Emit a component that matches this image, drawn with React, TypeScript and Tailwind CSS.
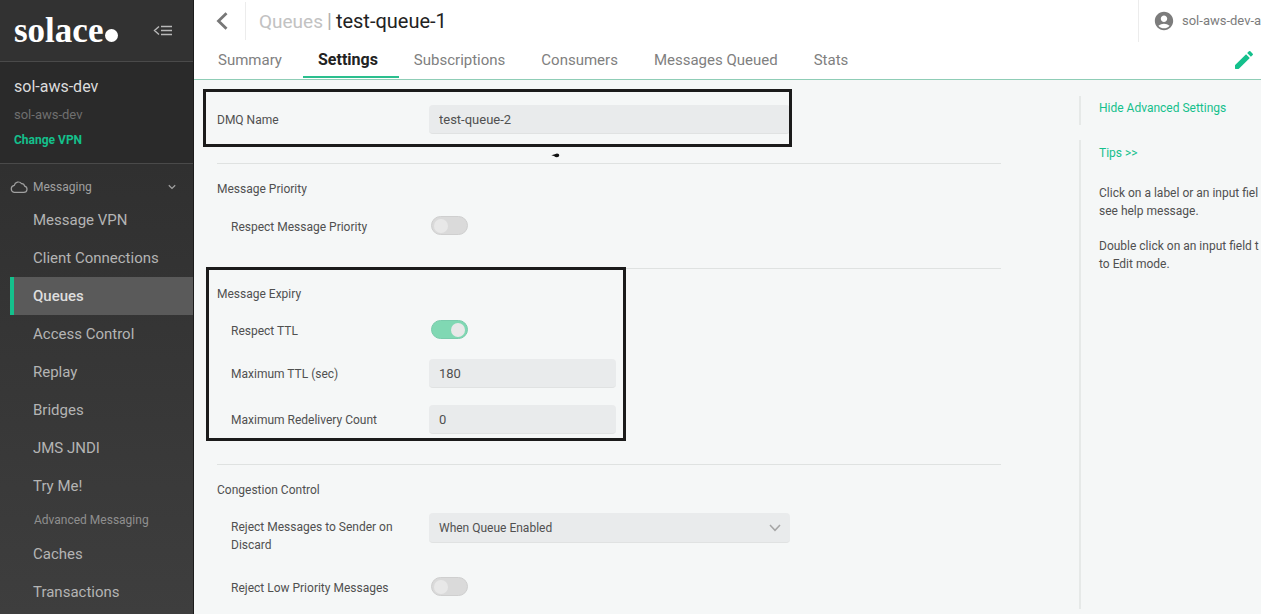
import { useId, useState } from "react";
import type { ReactNode } from "react";
import { MdAccountCircle } from "react-icons/md";

const primaryLinks = [
  "Message VPN",
  "Client Connections",
  "Queues",
  "Access Control",
  "Replay",
  "Bridges",
  "JMS JNDI",
  "Try Me!",
];
const advancedLinks = ["Caches", "Transactions"];
const tabs = ["Summary", "Settings", "Subscriptions", "Consumers", "Messages Queued", "Stats"];

function NavLink({ label }: { label: string }) {
  const active = label === "Queues";
  return (
    <li className="pl-[10px]">
      <a
        href="#"
        aria-current={active ? "page" : undefined}
        className={
          active
            ? "flex h-[38px] items-center border-l-4 border-[#14c08c] bg-[#5a5a5a] pl-[19px] font-medium text-[#dedede]"
            : "flex h-[38px] items-center pl-[23px] text-[#b4b4b4]"
        }
      >
        {label}
      </a>
    </li>
  );
}

function Sidebar() {
  return (
    <aside className="flex w-[194px] shrink-0 flex-col border-r border-[#1c1c1c] bg-linear-to-b from-[#2b2b2b] to-[#3e3e3e]">
      <div className="flex h-[62px] items-center justify-between border-b border-[#4a4a4a] bg-[#323232] pr-[20px] pl-[14px]">
        <div className="flex items-baseline gap-[2px] font-['Liberation_Serif',serif] text-[35px] leading-[40px] font-bold text-white">
          solace
          <svg width="13" height="13" viewBox="0 0 13 13" aria-hidden="true">
            <circle cx="6.5" cy="6.5" r="6.5" fill="#fff" />
          </svg>
        </div>
        <button type="button" aria-label="Collapse menu">
          <svg width="20" height="12" viewBox="0 0 20 12" fill="none" stroke="#b9b9b9" strokeWidth="1.4">
            <path d="M6 1.5 1.500 5.500 6 9.500M8 1.500h11M8 5.500h11M8 9.500h11" />
          </svg>
        </button>
      </div>
      <div className="flex h-[102px] flex-col border-b border-[#4a4a4a] bg-[#2a2a2a] pt-[15px] pl-[14px]">
        <p className="text-[16px] leading-[20px] text-[#dcdcdc]">sol-aws-dev</p>
        <p className="mt-[8px] text-[13px] leading-[20px] text-[#6f6f6f]">sol-aws-dev</p>
        <a href="#" className="mt-[6px] text-[12px] leading-[18px] font-bold text-[#14c08c]">
          Change VPN
        </a>
      </div>
      <nav>
        <button type="button" className="flex h-[37px] w-full items-center pt-[8px] pr-[17px] pl-[10px] text-[12px] text-[#a0a0a0]">
          <svg width="18" height="14" viewBox="0 0 18 14" fill="none" stroke="currentColor" strokeWidth="1.2" aria-hidden="true">
            <path d="M4.2 12.4h9.6a3.2 3.2 0 0 0 .8-6.3A3 3 0 0 0 11.500 3.700 4 4 0 0 0 4.300 5.300 3.600 3.600 0 0 0 4.200 12.400Z" />
          </svg>
          <span className="ml-[5px] flex-1 text-left">Messaging</span>
          <svg width="8" height="6" viewBox="0 0 8 6" fill="none" stroke="currentColor" strokeWidth="1.3" aria-hidden="true">
            <path d="M.8 1.200 4 4.400 7.200 1.200" />
          </svg>
        </button>
        <ul className="text-[15px]">
          {primaryLinks.map((label) => (
            <NavLink key={label} label={label} />
          ))}
        </ul>
        <h2 className="flex h-[30px] items-center pl-[34px] text-[12px] text-[#8f8f8f]">Advanced Messaging</h2>
        <ul className="text-[15px]">
          {advancedLinks.map((label) => (
            <NavLink key={label} label={label} />
          ))}
        </ul>
      </nav>
    </aside>
  );
}

function Header() {
  return (
    <header className="border-b border-[#8fcdb6] bg-white">
      <div className="flex h-[42px] items-center">
        <button type="button" aria-label="Back" className="ml-[22px]">
          <svg width="12" height="18" viewBox="0 0 12 18" fill="none" stroke="#777" strokeWidth="2.800">
            <path d="M10.500 1.200 2.500 9l8 7.800" />
          </svg>
        </button>
        <div className="ml-[17px] h-[38px] border-l border-[#ececec]" />
        <h1 className="ml-[13px] flex-1 text-[20px] leading-[24px] text-[#222]">
          <span className="text-[19px] text-[#c2c2c2]">Queues</span>
          <span className="mx-[4px] text-[#b0b0b0]">|</span>
          test-queue-1
        </h1>
        <div className="flex h-[42px] w-[123px] shrink-0 items-center overflow-hidden border-l border-[#ececec] pl-[14px] text-[13px] whitespace-nowrap text-[#7c7c7c]">
          <MdAccountCircle size={22} className="shrink-0" />
          <span className="ml-[7px]">sol-aws-dev-a</span>
        </div>
      </div>
      <div className="flex h-[37px] items-stretch justify-between pr-[5px] pb-px pl-[9px]">
        <nav className="flex text-[15px]">
          {tabs.map((label) => (
            <a
              key={label}
              href="#"
              aria-current={label === "Settings" ? "page" : undefined}
              className={
                label === "Settings"
                  ? "border-b-2 border-[#2bbf8e] pt-[8px] pr-[21px] pl-[15px] text-[16px] leading-[20px] font-bold text-[#222]"
                  : "pt-[8px] pr-[21px] pl-[15px] leading-[20px] text-[#808080]"
              }
            >
              {label}
            </a>
          ))}
        </nav>
        <button type="button" aria-label="Edit" className="self-center">
          <svg width="24" height="24" viewBox="0 0 24 24" fill="#14c08c">
            <path d="M3 17.460v3.040c0 .28.22.5.5.5h3.040c.13 0 .26-.05.35-.15L17.810 9.940l-3.750-3.750L3.150 17.100c-.1.1-.15.22-.15.36zM20.710 7.040a1 1 0 0 0 0-1.410l-2.340-2.340a1 1 0 0 0-1.410 0l-1.830 1.830 3.750 3.750 1.830-1.830z" />
          </svg>
        </button>
      </div>
    </header>
  );
}

function Toggle({ label, on = false }: { label: string; on?: boolean }) {
  const id = useId();
  const [checked, setChecked] = useState(on);
  return (
    <div className="flex h-[20px] items-start pl-[14px]">
      <label htmlFor={id} className="w-[200px] leading-[22px]">
        {label}
      </label>
      <input
        id={id}
        type="checkbox"
        role="switch"
        checked={checked}
        onChange={(e) => setChecked(e.target.checked)}
        className="flex h-[19px] w-[37px] appearance-none items-center rounded-full border border-[#cfcfcf] bg-[#dadada] px-[2px] before:size-[14px] before:rounded-full before:bg-[#e8e8e8] checked:justify-end checked:border-[#79cbab] checked:bg-[#80d8b3]"
      />
    </div>
  );
}

function TextField({ label, value, wide = false }: { label: string; value: string; wide?: boolean }) {
  const id = useId();
  return (
    <div className={wide ? "flex items-center" : "flex items-center pl-[14px]"}>
      <label htmlFor={id} className={wide ? "w-[212px] shrink-0" : "w-[198px] shrink-0"}>
        {label}
      </label>
      <input
        id={id}
        type="text"
        defaultValue={value}
        className={
          wide
            ? "h-[29px] w-[361px] rounded-sm border-b border-[#e0e2e2] bg-[#e9ebec] px-[10px] text-[13px]"
            : "h-[29px] w-[187px] rounded-sm border-b border-[#e0e2e2] bg-[#e9ebec] px-[10px] text-[13px]"
        }
      />
    </div>
  );
}

function Section({ title, children }: { title: string; children: ReactNode }) {
  return (
    <section className="border-t border-[#dfe2e1] pt-[16px]">
      <h2 className="leading-[18px]">{title}</h2>
      {children}
    </section>
  );
}

function SettingsForm() {
  const id = useId();
  return (
    <form className="flex-1 pt-[25px] pr-[78px] pl-[23px] text-[12px] text-[#505050]">
      <div className="relative pb-[29px]">
        <TextField label="DMQ Name" value="test-queue-2" wide />
        <div className="pointer-events-none absolute -top-[16px] -left-[14px] h-[58px] w-[589px] border-[3px] border-[#1b1b1b]" />
        <svg className="absolute top-[48px] left-[334px]" width="9" height="5" viewBox="0 0 9 5" aria-hidden="true">
          <path d="M.3 2.200 3 1.400 6 .4Q8.300.6 8.300 2.300 8.100 4.200 6 4.200 4.300 4 3 2.900Z" fill="#111" />
        </svg>
      </div>
      <Section title="Message Priority">
        <div className="pt-[18px] pb-[32px]">
          <Toggle label="Respect Message Priority" />
        </div>
      </Section>
      <div className="relative">
        <Section title="Message Expiry">
          <div className="flex flex-col pt-[17px] pb-[30px]">
            <Toggle label="Respect TTL" on />
            <div className="mt-[19px] flex flex-col gap-[17px]">
              <TextField label="Maximum TTL (sec)" value="180" />
              <TextField label="Maximum Redelivery Count" value="0" />
            </div>
          </div>
        </Section>
        <div className="pointer-events-none absolute -top-px -left-[11px] h-[174px] w-[420px] border-[3px] border-[#1b1b1b]" />
      </div>
      <Section title="Congestion Control">
        <div className="flex items-start pt-[14px] pb-[23px] pl-[14px]">
          <label htmlFor={id} className="w-[198px] shrink-0 pt-[5px] pr-[20px] leading-[18px]">
            Reject Messages to Sender on Discard
          </label>
          <div className="relative w-[361px]">
            <select
              id={id}
              className="h-[30px] w-full appearance-none rounded-sm border-b border-[#e0e2e2] bg-[#e9ebec] px-[10px]"
            >
              <option>When Queue Enabled</option>
            </select>
            <svg className="pointer-events-none absolute top-[11px] right-[9px]" width="12" height="8" viewBox="0 0 12 8" fill="none" stroke="#a5a5a5" strokeWidth="1.5" aria-hidden="true">
              <path d="M1 1l5 5.300L11 1" />
            </svg>
          </div>
        </div>
        <Toggle label="Reject Low Priority Messages" />
      </Section>
    </form>
  );
}

function HelpPanel() {
  return (
    <aside className="flex w-[182px] shrink-0 flex-col overflow-hidden pt-[16px] pb-[5px] text-[12px] leading-[18px] whitespace-nowrap text-[#505050]">
      <div className="h-[29px] border-l-2 border-[#e6e9e8] pt-[3px] pl-[18px]">
        <a href="#" className="text-[#14c08c]">
          Hide Advanced Settings
        </a>
      </div>
      <div className="mt-[15px] flex-1 border-l-2 border-[#e6e9e8] pt-[4px] pl-[18px]">
        <a href="#" className="text-[#14c08c]">
          Tips &gt;&gt;
        </a>
        <p className="mt-[22px]">
          Click on a label or an input fiel
          <br />
          see help message.
        </p>
        <p className="mt-[17px]">
          Double click on an input field t
          <br />
          to Edit mode.
        </p>
      </div>
    </aside>
  );
}

export default function App() {
  return (
    <div className="flex min-h-screen font-['Roboto',sans-serif]">
      <Sidebar />
      <div className="flex min-w-0 flex-1 flex-col bg-[#f5f7f7]">
        <Header />
        <main className="flex flex-1">
          <SettingsForm />
          <HelpPanel />
        </main>
      </div>
    </div>
  );
}
